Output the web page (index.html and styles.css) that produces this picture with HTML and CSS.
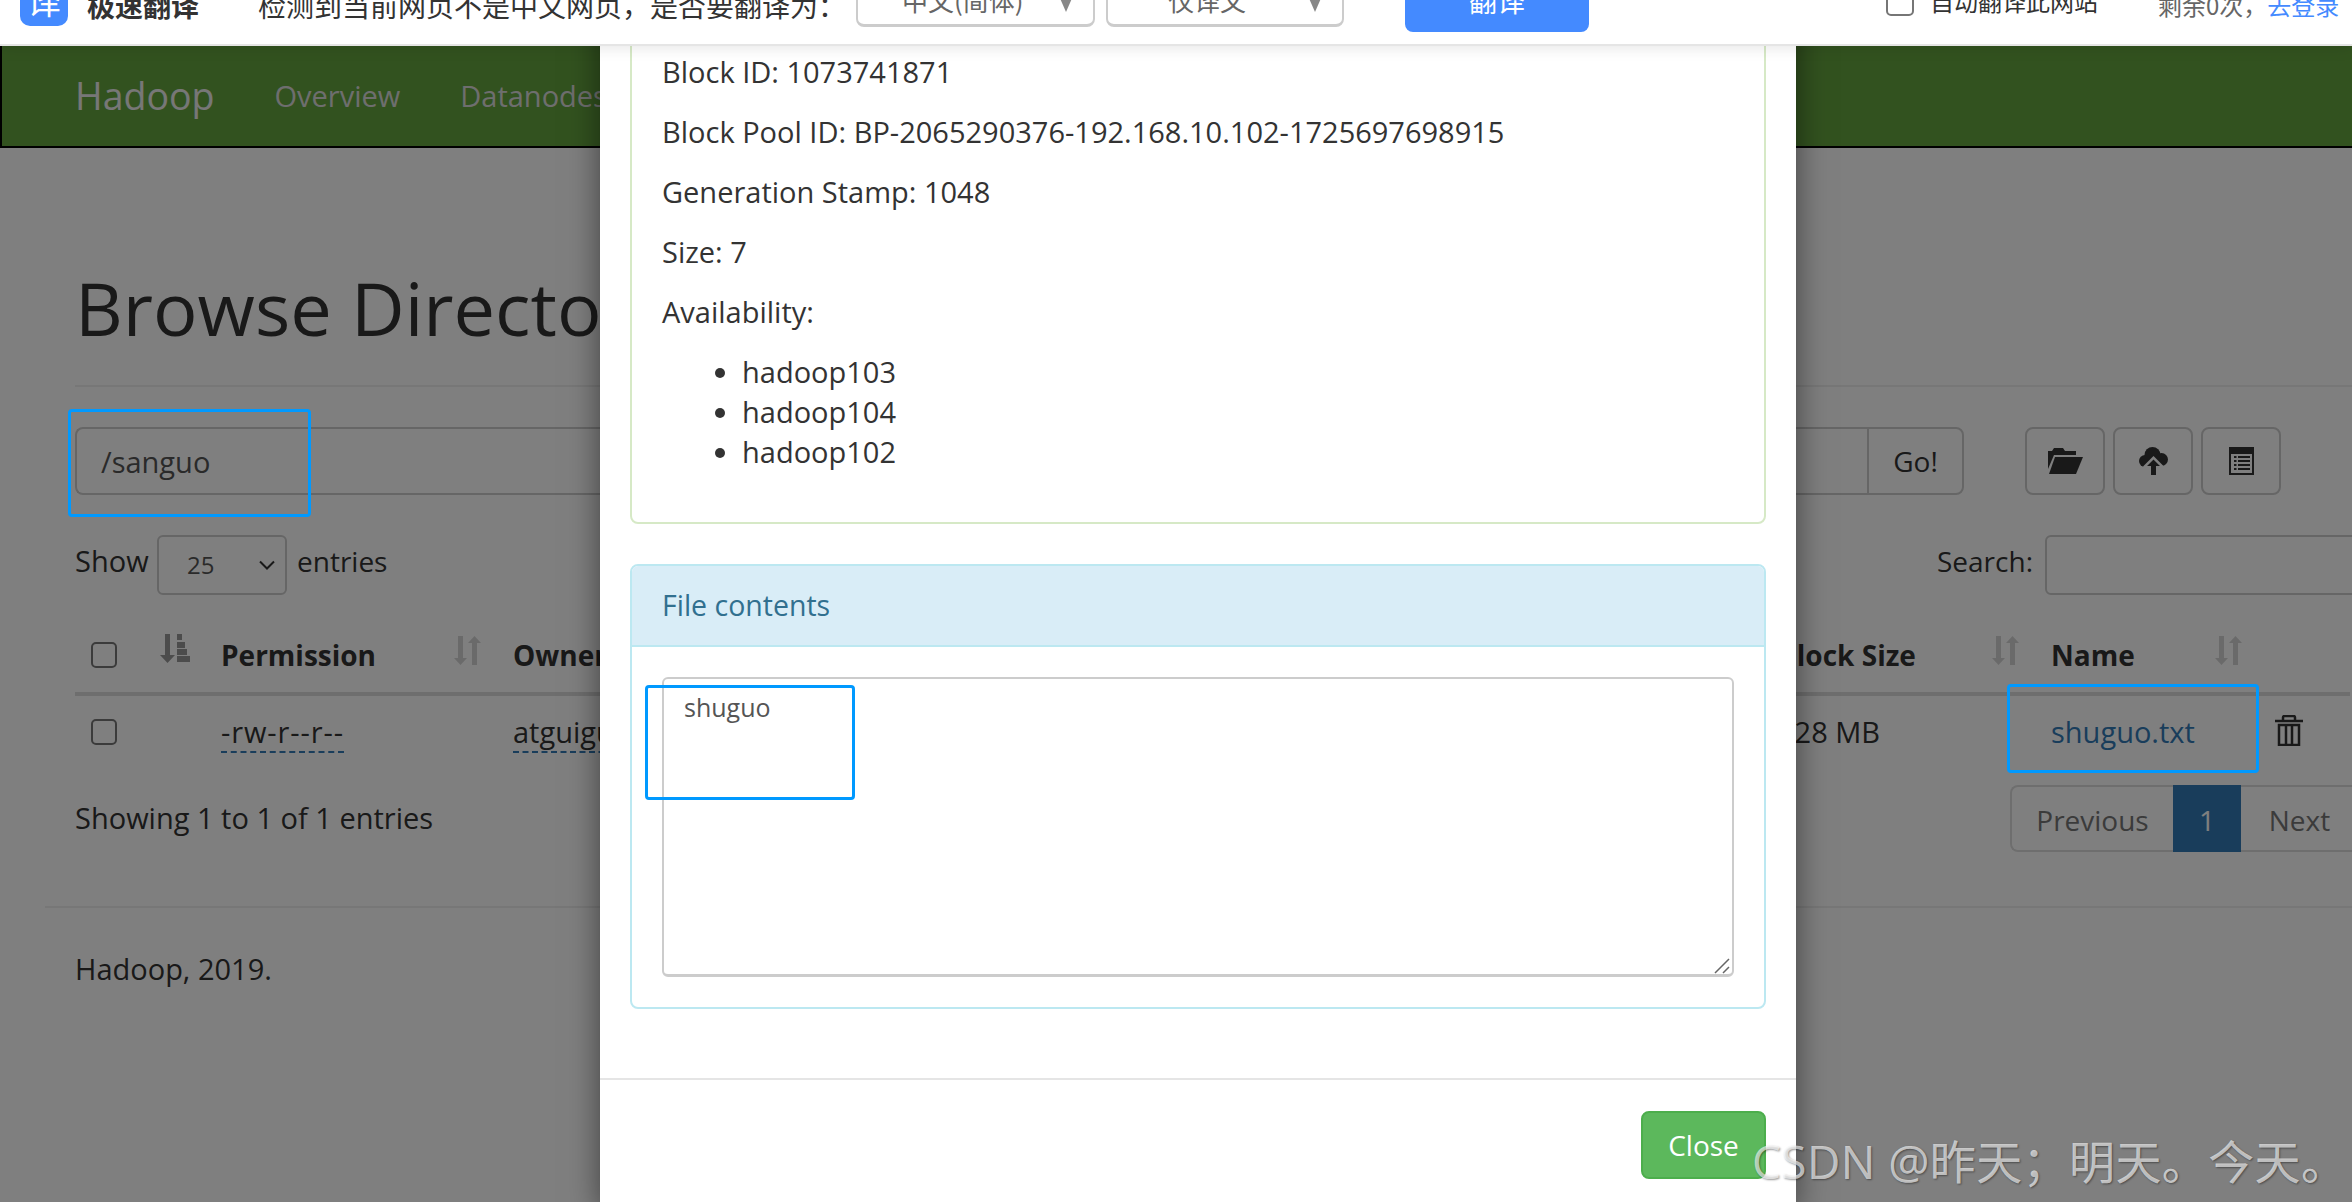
FILE: index.html
```html
<!DOCTYPE html>
<html lang="en">
<head>
<meta charset="utf-8">
<title>Browsing HDFS</title>
<link rel="stylesheet" href="styles.css">
</head>
<body>
<div class="topbar">
  <div class="tb-logo">译</div>
  <div class="tb-brand">极速翻译</div>
  <div class="tb-msg">检测到当前网页不是中文网页，是否要翻译为：</div>
  <div class="tb-select tb-select-a"><span>中文(简体)</span><i class="tb-caret"></i></div>
  <div class="tb-select tb-select-b"><span>仅译文</span><i class="tb-caret"></i></div>
  <div class="tb-btn">翻译</div>
  <div class="tb-check"></div>
  <div class="tb-auto">自动翻译此网站</div>
  <div class="tb-left">剩余0次，<a class="tb-login">去登录</a></div>
</div>

<nav class="navbar">
  <span class="brand">Hadoop</span>
  <a class="nav-link">Overview</a>
  <a class="nav-link">Datanodes</a>
</nav>

<main class="container">
  <div class="page-header"><h1>Browse Directory</h1></div>

  <div class="path-row">
    <div class="input-group">
      <div class="path-input">/sanguo</div>
      <div class="go-btn">Go!</div>
    </div>
    <div class="icon-btn icon-btn-first">
      <svg width="35" height="26" viewBox="0 0 35 26"><path class="ink" d="M0 3h4l2-3h9l2 3h11v4H6L0 21z"/><path class="ink" d="M7 9h28l-7 17H1z"/></svg>
    </div>
    <div class="icon-btn">
      <svg width="29" height="28" viewBox="0 0 29 28"><circle class="ink" cx="6" cy="14" r="6"/><circle class="ink" cx="13.500" cy="8" r="8"/><circle class="ink" cx="22.500" cy="12.500" r="6.500"/><path class="ink" d="M6 12h17v8H6z"/><path class="paper" d="M14.500 9L4 19.500V25h21v-5.500z"/><path class="ink" d="M14.500 12.500L21 19h-4v9h-5v-9H8z"/></svg>
    </div>
    <div class="icon-btn">
      <svg width="25" height="28" viewBox="0 0 25 28"><path class="ink" d="M0 0h25v28H0z"/><path class="paper" d="M2 7h21v19H2z"/><path class="ink" d="M5 9h2.500v2H5zM9 9h12v2H9zM5 13h2.500v2H5zM9 13h12v2H9zM5 17h2.500v2H5zM9 17h12v2H9zM5 21h2.500v2H5zM9 21h12v2H9z"/></svg>
    </div>
  </div>

  <div class="dt-row">
    <span class="show-label">Show</span>
    <div class="len-select"><span>25</span><svg width="16" height="10" viewBox="0 0 16 10"><path class="chev" d="M1 1.500l7 7 7-7"/></svg></div>
    <span>entries</span>
    <div class="search"><span>Search:</span><div class="search-input"></div></div>
  </div>

  <table class="files">
    <thead>
      <tr>
        <th class="c-check"><span class="cb"></span>
          <svg class="sort sort-on" width="30" height="30" viewBox="0 0 30 30"><path d="M5 0h5v21h5l-7.500 8L0 21h5z"/><path d="M17 0h5v6h-5zM17 8h8v6h-8zM17 15h10v6H17zM17 22h13v6H17z"/></svg>
        </th>
        <th class="c-perm">Permission
          <svg class="sort" width="27" height="29" viewBox="0 0 27 29"><path d="M4 0h5v22h4l-6.500 7L0 22h4z"/><path d="M18 29h5V7h4l-6.500-7L14 7h4z"/></svg>
        </th>
        <th class="c-owner">Owner</th>
        <th class="c-group">Group</th>
        <th class="c-size">Size</th>
        <th class="c-mod">Last Modified</th>
        <th class="c-rep">Replication</th>
        <th class="c-block">Block Size
          <svg class="sort" width="27" height="29" viewBox="0 0 27 29"><path d="M4 0h5v22h4l-6.500 7L0 22h4z"/><path d="M18 29h5V7h4l-6.500-7L14 7h4z"/></svg>
        </th>
        <th class="c-name">Name
          <svg class="sort" width="27" height="29" viewBox="0 0 27 29"><path d="M4 0h5v22h4l-6.500 7L0 22h4z"/><path d="M18 29h5V7h4l-6.500-7L14 7h4z"/></svg>
        </th>
        <th class="c-del"></th>
      </tr>
    </thead>
    <tbody>
      <tr>
        <td><span class="cb"></span></td>
        <td><span class="dash dash-perm">-rw-r--r--</span></td>
        <td><span class="dash">atguigu</span></td>
        <td><span class="dash">supergroup</span></td>
        <td>7 B</td>
        <td>Sep 07 16:32</td>
        <td>3</td>
        <td>128 MB</td>
        <td><a class="file-link">shuguo.txt</a></td>
        <td>
          <svg class="trash" width="28" height="31" viewBox="0 0 28 31"><path class="trash-line" d="M8 5V2.500Q8 1 9.500 1h9Q20 1 20 2.500V5M0 6h28M4 10h20v20H4zM11 10v20M17 10v20"/></svg>
        </td>
      </tr>
    </tbody>
  </table>

  <div class="info-row">
    <span class="info">Showing 1 to 1 of 1 entries</span>
    <div class="pager">
      <span class="pg pg-prev">Previous</span>
      <span class="pg pg-on">1</span>
      <span class="pg pg-next">Next</span>
    </div>
  </div>
</main>

<footer class="site-footer">
  <hr class="foot-rule">
  <p class="foot-text">Hadoop, 2019.</p>
</footer>

<div class="overlay"></div>

<section class="modal">
  <div class="modal-body">
    <div class="panel panel-ok">
      <div class="panel-body">
        <p>Block ID: 1073741871</p>
        <p>Block Pool ID: BP-2065290376-192.168.10.102-1725697698915</p>
        <p>Generation Stamp: 1048</p>
        <p>Size: 7</p>
        <p>Availability:</p>
        <ul>
          <li>hadoop103</li>
          <li>hadoop104</li>
          <li>hadoop102</li>
        </ul>
      </div>
    </div>
    <div class="panel panel-info">
      <div class="panel-heading">File contents</div>
      <div class="panel-body">
        <div class="contents-wrap">
          <textarea class="contents" readonly>shuguo</textarea>
          <svg class="grip" width="16" height="16" viewBox="0 0 16 16"><path class="grip-line" d="M1 15L15 1M9 15l6-6"/></svg>
        </div>
      </div>
    </div>
  </div>
  <div class="modal-footer"><span class="close-btn">Close</span></div>
</section>

<div class="mark mark-path"></div>
<div class="mark mark-name"></div>
<div class="mark mark-text"></div>
<div class="watermark">CSDN @昨天；明天。今天。</div>
</body>
</html>
```
FILE: styles.css
```css
* { box-sizing: border-box; }
html, body { margin: 0; height: 1202px; overflow: hidden; }
body {
  position: relative;
  width: 2352px;
  background: #fff;
  color: #333;
  font: 28px/40px "Open Sans", "Noto Sans CJK SC", sans-serif;
}

/* translate bar */
.topbar {
  position: relative;
  z-index: 3;
  height: 46px;
  display: flex;
  align-items: flex-start;
  overflow: hidden;
  background: #fff;
  border-bottom: 2px solid #e5e5e5;
  box-shadow: 0 2px 14px rgba(0,0,0,.1);
  font-family: "Noto Sans CJK SC", sans-serif;
  white-space: nowrap;
}
.tb-logo {
  flex: none;
  width: 48px;
  height: 48px;
  margin: -22px 0 0 20px;
  background: #448aff;
  border-radius: 0 0 10px 10px;
  color: #fff;
  font-size: 34px;
  line-height: 44px;
  text-align: center;
}
.tb-brand { flex: none; margin: -15px 0 0 19px; font-weight: 700; color: #333; }
.tb-msg { flex: none; margin: -15px 0 0 59px; width: 588px; color: #333; }
.tb-select {
  flex: none;
  display: flex;
  align-items: flex-end;
  justify-content: space-between;
  height: 80px;
  margin: -53px 0 0 11px;
  padding-bottom: 4px;
  padding-right: 20px;
  border: 2px solid #ccc;
  border-bottom-width: 3px;
  border-radius: 8px;
  color: #666;
  font-size: 26px;
}
.tb-select-a { width: 239px; padding-left: 44px; margin-left: 10px; }
.tb-select-b { width: 238px; padding-left: 60px; }
.tb-caret {
  width: 0;
  height: 0;
  margin-bottom: 8px;
  border: 7px solid transparent;
  border-top: 16px solid #888;
  border-bottom: 0;
}
.tb-btn {
  flex: none;
  width: 184px;
  height: 72px;
  margin: -40px 0 0 61px;
  padding-top: 20px;
  background: #448aff;
  border-radius: 8px;
  color: #fff;
  text-align: center;
}
.tb-check {
  flex: none;
  width: 28px;
  height: 30px;
  margin: -14px 0 0 297px;
  border: 2px solid #767676;
  border-radius: 5px;
}
.tb-auto { flex: none; margin: -19px 0 0 16px; font-size: 24px; color: #333; }
.tb-left { flex: none; margin: -15px 0 0 60px; font-size: 24px; color: #666; }
.tb-login { color: #448aff; }

/* navbar */
.navbar {
  height: 102px;
  display: flex;
  align-items: center;
  padding-left: 73px;
  background: #65a43f;
  border-bottom: 2px solid #000;
  border-left: 2px solid #000;
  white-space: nowrap;
}
.brand { font-size: 37.500px; color: #eee; }
.nav-link { color: #ddd; font-size: 29px; margin-left: 60px; }

/* page under the dialog */
.container { padding-left: 75px; width: 2352px; }
.page-header { padding: 120px 0 38px; border-bottom: 2px solid #eee; }
h1 { margin: 0; font-size: 74px; line-height: 79px; font-weight: 400; color: #333; }

.path-row { display: flex; margin-top: 40px; height: 68px; }
.input-group { display: flex; width: 1889px; }
.path-input {
  flex: 1;
  padding: 13px 24px;
  border: 2px solid #ccc;
  border-right: 0;
  border-radius: 8px 0 0 8px;
  color: #555;
  font-size: 29px;
}
.go-btn {
  width: 97px;
  padding-top: 12px;
  text-align: center;
  border: 2px solid #ccc;
  border-radius: 0 8px 8px 0;
}
.icon-btn {
  flex: none;
  display: flex;
  align-items: center;
  justify-content: center;
  width: 80px;
  margin-left: 8px;
  border: 2px solid #ccc;
  border-radius: 8px;
}
.icon-btn-first { margin-left: 61px; }
.ink { fill: #333; }
.paper { fill: #fff; }

.dt-row { display: flex; align-items: center; gap: 10px; margin-top: 40px; height: 60px; }
.dt-row > span { margin-top: -8px; }
.show-label { width: 72px; font-size: 29px; white-space: nowrap; }
.len-select {
  display: flex;
  align-items: center;
  justify-content: space-between;
  width: 130px;
  height: 60px;
  padding: 0 10px 0 28px;
  border: 2px solid #ccc;
  border-radius: 6px;
  font-size: 24px;
  color: #555;
}
.chev { fill: none; stroke: #333; stroke-width: 2; }
.search { display: flex; align-items: center; gap: 12px; margin-left: auto; margin-right: -33px; }
.search > span { margin-top: -8px; }
.search-input { width: 340px; height: 60px; border: 2px solid #ccc; border-radius: 6px; }

.files { table-layout: fixed; border-collapse: collapse; width: 2275px; margin-top: 25px; }
.files th, .files td { position: relative; padding: 16px; text-align: left; white-space: nowrap; overflow: visible; }
.files td { font-size: 29px; }
.files th { padding: 15px 16px 17px; border-bottom: 4px solid #ddd; font-weight: 700; }
.c-check { width: 130px; }
.c-perm { width: 292px; }
.c-owner { width: 261px; }
.c-group { width: 240px; }
.c-size { width: 200px; }
.c-mod { width: 200px; }
.c-rep { width: 364px; }
.c-block { width: 273px; }
.c-name { width: 225px; }
.files .c-del { width: 90px; padding: 0; }
.cb {
  display: block;
  width: 26px;
  height: 26px;
  border: 2px solid #767676;
  border-radius: 5px;
  background: #fff;
}
.sort { position: absolute; top: 16px; right: 18px; fill: #333; opacity: .2; }
.sort-on { right: 15px; top: 14px; opacity: .5; }
.c-perm .sort, .c-block .sort { right: 16px; }
.dash { border-bottom: 2px dashed #337ab7; }
.dash-perm { letter-spacing: .9px; }
.file-link { color: #337ab7; }
.trash { position: absolute; left: 15px; top: 19px; }
.trash-line { fill: none; stroke: #333; stroke-width: 2.500; }

.info-row { display: flex; align-items: flex-start; margin-top: 17px; }
.info { margin-top: 13px; font-size: 29px; }
.pager { display: flex; margin-left: auto; margin-right: -8px; height: 67px; }
.pg { padding-top: 13px; text-align: center; border: 2px solid #ddd; }
.pg-prev { width: 163px; color: #777; border-right: 0; border-radius: 8px 0 0 8px; }
.pg-on { width: 68px; color: #fff; background: #337ab7; border-color: #337ab7; }
.pg-next { width: 119px; color: #777; border-left: 0; border-radius: 0 8px 8px 0; }

.site-footer { padding-left: 45px; }
.foot-rule { margin: 54px 0 0; border: 0; border-top: 2px solid #eee; }
.foot-text { margin: 41px 0 0 30px; font-size: 29px; }

/* overlay + dialog */
.overlay { position: absolute; inset: 0; z-index: 1; background: rgba(0,0,0,.5); }
.modal {
  position: absolute;
  z-index: 2;
  left: 600px;
  top: 0;
  width: 1196px;
  height: 1202px;
  background: #fff;
  box-shadow: 0 10px 30px rgba(0,0,0,.5);
}
.modal-body { padding: 20px 30px 29px 30px; }
.panel { border: 2px solid; border-radius: 8px; margin-bottom: 40px; font-size: 29px; }
.panel-body { padding: 30px; }
.panel-ok { border-color: #d6e9c6; }
.panel-info { border-color: #bce8f1; }
.panel-heading {
  height: 81px;
  padding: 19px 30px;
  background: #d9edf7;
  border-bottom: 2px solid #bce8f1;
  border-radius: 6px 6px 0 0;
  color: #31708f;
  font-size: 28.500px;
}
.panel p { margin: 0 0 20px; }
.panel ul { margin: 0 0 20px; padding-left: 80px; }
.contents-wrap { position: relative; }
.contents {
  display: block;
  width: 100%;
  height: 300px;
  padding: 10px 20px;
  border: 2px solid #ccc;
  border-bottom-width: 3px;
  border-radius: 6px;
  color: #555;
  background: #fff;
  font: 25px/36px "Open Sans", sans-serif;
  outline: 0;
  resize: none;
}
.grip { position: absolute; right: 4px; bottom: 3px; }
.grip-line { fill: none; stroke: #666; stroke-width: 1.500; }
.modal-footer { padding: 31px 30px 0; border-top: 2px solid #e5e5e5; text-align: right; }
.close-btn {
  display: inline-block;
  width: 125px;
  height: 68px;
  padding-top: 12px;
  text-align: center;
  color: #fff;
  background: #5cb85c;
  border: 2px solid #4cae4c;
  border-radius: 8px;
}

/* screenshot annotations */
.mark { position: absolute; z-index: 4; border: 3px solid #0099ff; border-radius: 4px; }
.mark-path { left: 68px; top: 409px; width: 243px; height: 108px; }
.mark-name { left: 2007px; top: 684px; width: 252px; height: 89px; }
.mark-text { left: 645px; top: 685px; width: 210px; height: 115px; }
.watermark {
  position: absolute;
  z-index: 5;
  left: 1752px;
  top: 1129px;
  color: rgba(255,255,255,.65);
  font: 46px/64px "Open Sans", "Noto Sans CJK SC", sans-serif;
  letter-spacing: .4px;
  text-shadow: 1px 1px 2px rgba(0,0,0,.4);
  white-space: nowrap;
}
```
